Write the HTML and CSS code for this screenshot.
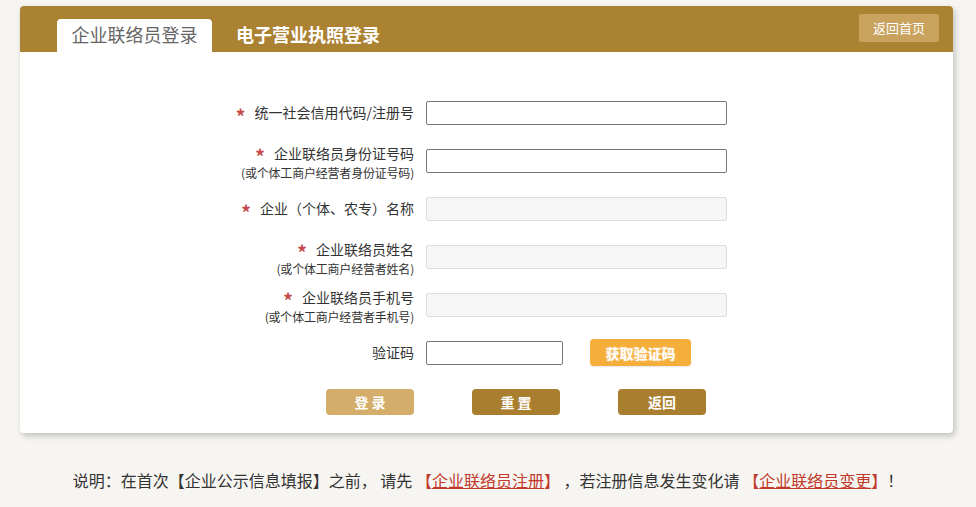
FILE: index.html
```html
<!DOCTYPE html>
<html lang="zh-CN">
<head>
<meta charset="utf-8">
<title>企业联络员登录</title>
<link rel="stylesheet" href="styles.css">
</head>
<body>
<div class="card">
  <div class="header">
    <div class="tab tab-active">企业联络员登录</div>
    <div class="tab tab-other">电子营业执照登录</div>
    <a class="home-btn">返回首页</a>
  </div>
  <div class="body">
    <div class="row">
      <div class="label"><span class="star">*</span><span class="main">统一社会信用代码/注册号</span></div>
      <input class="field" type="text">
    </div>
    <div class="row">
      <div class="label two"><div class="main"><span class="star">*</span>企业联络员身份证号码</div><div class="sub">(或个体工商户经营者身份证号码)</div></div>
      <input class="field" type="text">
    </div>
    <div class="row">
      <div class="label"><span class="star">*</span><span class="main">企业（个体、农专）名称</span></div>
      <input class="field disabled" type="text" disabled>
    </div>
    <div class="row">
      <div class="label two"><div class="main"><span class="star">*</span>企业联络员姓名</div><div class="sub">(或个体工商户经营者姓名)</div></div>
      <input class="field disabled" type="text" disabled>
    </div>
    <div class="row">
      <div class="label two"><div class="main"><span class="star">*</span>企业联络员手机号</div><div class="sub">(或个体工商户经营者手机号)</div></div>
      <input class="field disabled" type="text" disabled>
    </div>
    <div class="row">
      <div class="label"><span class="main">验证码</span></div>
      <input class="field short" type="text">
      <button class="code-btn">获取验证码</button>
    </div>
    <div class="actions">
      <button class="btn btn-light">登 录</button>
      <button class="btn btn-dark">重 置</button>
      <button class="btn btn-dark">返回</button>
    </div>
  </div>
</div>
<p class="note">说明：在首次【企业公示信息填报】之前， 请先 <span class="link">【<u>企业联络员注册</u>】</span> ，若注册信息发生变化请 <span class="link">【<u>企业联络员变更</u>】</span>！</p>
</body>
</html>
```
FILE: styles.css
```css
html, body {
  margin: 0;
  padding: 0;
}
body {
  background: #f7f5f2;
  font-family: "Noto Sans CJK SC", "Liberation Sans", sans-serif;
  color: #333;
}
.card {
  width: 933px;
  margin: 6px 0 0 20px;
  background: #fff;
  border-radius: 4px;
  box-shadow: 2px 3px 6px rgba(0, 0, 0, 0.22);
}
.header {
  height: 46px;
  background: #ab8232;
  border-radius: 4px 4px 0 0;
  display: flex;
  align-items: flex-end;
  padding-left: 37px;
  padding-right: 14px;
}
.tab {
  height: 33px;
  line-height: 31px;
  font-size: 18px;
}
.tab-active {
  width: 155px;
  background: #fff;
  color: #666;
  border-radius: 4px 4px 0 0;
  text-align: center;
}
.tab-other {
  margin-left: 24px;
  color: #fff;
  font-weight: bold;
}
.home-btn {
  margin-left: auto;
  align-self: flex-start;
  margin-top: 8px;
  width: 80px;
  height: 28px;
  line-height: 28px;
  text-align: center;
  background: #c9a25e;
  color: #fff;
  font-size: 13px;
  border-radius: 2px;
}
.body {
  padding: 49px 0 18px 0;
}
.row {
  display: flex;
  align-items: flex-start;
  height: 48px;
}
.label {
  width: 394px;
  margin-right: 12px;
  text-align: right;
  font-size: 14px;
  line-height: 22px;
  display: flex;
  justify-content: flex-end;
  align-items: center;
}
.label.two {
  display: block;
  line-height: 17px;
  margin-top: -4px;
}
.label .sub {
  font-size: 12px;
  line-height: 15px;
  margin-top: 3px;
  letter-spacing: -0.2px;
}
.star {
  display: inline-block;
  vertical-align: top;
  height: 14px;
  overflow: visible;
  color: #c44a4a;
  font-size: 19px;
  font-weight: bold;
  margin-right: 9px;
  line-height: 22px;
}
.field {
  box-sizing: border-box;
  width: 301px;
  height: 24px;
  margin: 0;
  border: 1px solid #777;
  border-radius: 2px;
  background: #fff;
  padding: 0 4px;
  font-size: 14px;
}
.field.disabled {
  background: #f6f6f6;
  border-color: #ddd;
}
.field.short {
  width: 137px;
}
.code-btn {
  margin: -2px 0 0 27px;
  width: 101px;
  height: 27px;
  background: #f6ae3a;
  border: none;
  border-radius: 4px;
  color: #fff;
  font-family: inherit;
  font-size: 14px;
  font-weight: bold;
  text-shadow: 0 0 2px rgba(255, 255, 255, 0.6);
  box-shadow: 0 1px 2px rgba(0, 0, 0, 0.1);
}
.actions {
  display: flex;
  padding-left: 306px;
  gap: 58px;
  margin-top: 0;
}
.btn {
  width: 88px;
  height: 26px;
  border: none;
  border-radius: 4px;
  color: #fff;
  font-family: inherit;
  font-size: 14px;
  font-weight: bold;
  padding: 0;
}
.btn-light {
  background: #d3ad69;
}
.btn-dark {
  background: #a97e2f;
}
.note {
  margin: 35px 0 0 0;
  text-align: center;
  font-size: 16px;
  color: #333;
}
.link {
  color: #c0392b;
}
.link u {
  text-decoration-color: #c0392b;
}
```
